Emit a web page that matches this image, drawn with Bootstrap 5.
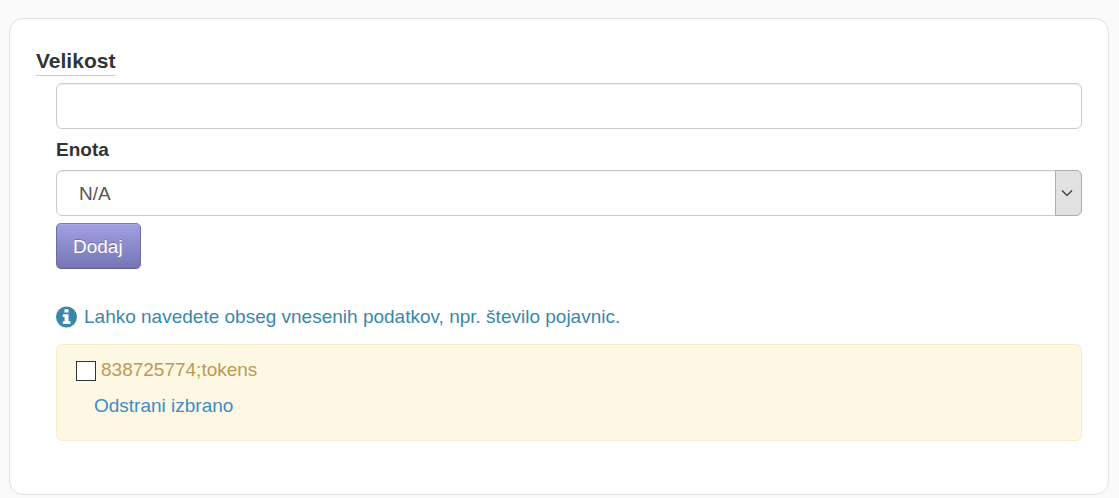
<!DOCTYPE html>
<html lang="sl">
<head>
<meta charset="utf-8">
<meta name="viewport" content="width=device-width, initial-scale=1">
<title>Velikost</title>
<link href="https://cdn.jsdelivr.net/npm/bootstrap@5.3.0/dist/css/bootstrap.min.css" rel="stylesheet">
<style>
body { background: #fafafa; color: #333; font-family: "Liberation Sans", Arial, sans-serif; font-size: 19px; line-height: 26px; }
.panel-box { margin: 18px 10px 0 9px; padding: 28px 26px 53px; border: 1px solid #e1e1e1; border-radius: 14px; background: #fff; }
.section-label { font-size: 21px; line-height: 28px; border-bottom: 1px solid #ccc; margin-bottom: 7px; }
.fields { padding-left: 20px; }
.field { height: 46px; padding: 9px 18px 8px; font-size: 19px; line-height: 26px; color: #555; border: 1px solid #ccc; border-radius: 6px; box-shadow: inset 0 1px 1px rgba(0,0,0,.075); }
.field-select { padding-left: 22px; background-image: none; }
.unit-label { margin: 8px 0 7px; }
.select-arrow { width: 27px; padding-right: 3px; background: #e1e1e1; border: 1px solid #adadad; border-radius: 0 6px 6px 0; pointer-events: none; }
.btn-add { height: 46px; margin-top: 7px; padding: 2px 17px 0 16px; font-size: 19px; border: 1px solid; border-color: #7c7cb5 #6c6ca5 #5c5c91; border-radius: 5px; color: #fff; background: linear-gradient(#a1a1e3, #7575b5) border-box; text-shadow: 0 -1px 0 rgba(0,0,0,.25); box-shadow: inset 0 1px 0 rgba(255,255,255,.1); }
.btn-add:hover { color: #fff; background: #7575b5; }
.hint { margin: 35px 0 14px; gap: 7px; color: #3a87ad; }
.entries { padding: 12px 19px 21px; background: #fcf8e3; border: 1px solid #faebcc; border-radius: 6px; color: #c09853; }
.entry { gap: 5px; }
.entry .entry-check { width: 20px; height: 20px; margin: 4px 0 0; border: 1px solid #333; border-radius: 0; background-color: #fff; }
.remove-link { margin: 10px 0 0 18px; color: #428bca; }
</style>
</head>
<body>
<main class="panel-box">
  <form>
    <label class="section-label d-table fw-bold" for="size">Velikost</label>
    <div class="fields">
      <input type="text" class="form-control field" id="size">
      <label class="unit-label d-block fw-bold" for="unit">Enota</label>
      <div class="position-relative">
        <select class="form-select field field-select" id="unit"><option>N/A</option></select>
        <span class="select-arrow position-absolute top-0 end-0 bottom-0 d-flex align-items-center justify-content-center" aria-hidden="true">
          <svg width="12" height="8" viewBox="0 0 12 8" fill="none" stroke="#333" stroke-width="1.2"><path d="M1 1.5l5 5 5-5"/></svg>
        </span>
      </div>
      <button type="button" class="btn btn-add d-block">Dodaj</button>
      <p class="hint d-flex align-items-center">
        <svg class="flex-shrink-0" width="21" height="22" viewBox="0 0 21 22" aria-hidden="true"><circle cx="10.5" cy="11" r="10.5" fill="#3a87ad"/><path fill="#fff" d="M8.5 3.2h4v3.2h-4zM6.8 8.2h5.7v7H14.4V18H6.8v-2.8h1.8v-4.3H6.8z"/></svg>
        <span>Lahko navedete obseg vnesenih podatkov, npr. število pojavnic.</span>
      </p>
      <div class="entries">
        <div class="entry d-flex">
          <input type="checkbox" class="form-check-input entry-check flex-shrink-0" id="entry1">
          <label for="entry1">838725774;tokens</label>
        </div>
        <a href="#" class="remove-link d-table text-decoration-none">Odstrani izbrano</a>
      </div>
    </div>
  </form>
</main>
<script src="https://cdn.jsdelivr.net/npm/bootstrap@5.3.0/dist/js/bootstrap.bundle.min.js"></script>
</body>
</html>
